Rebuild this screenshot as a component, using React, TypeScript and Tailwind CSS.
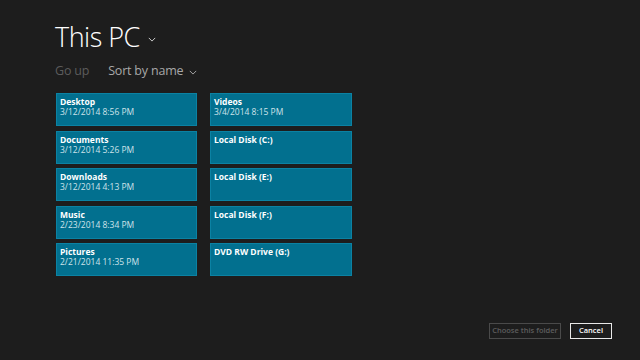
import React from "react";

const left = [
  { name: "Desktop", date: "3/12/2014 8:56 PM" },
  { name: "Documents", date: "3/12/2014 5:26 PM" },
  { name: "Downloads", date: "3/12/2014 4:13 PM" },
  { name: "Music", date: "2/23/2014 8:34 PM" },
  { name: "Pictures", date: "2/21/2014 11:35 PM" },
];
const right = [
  { name: "Videos", date: "3/4/2014 8:15 PM" },
  { name: "Local Disk (C:)", date: "" },
  { name: "Local Disk (E:)", date: "" },
  { name: "Local Disk (F:)", date: "" },
  { name: "DVD RW Drive (G:)", date: "" },
];

function Chevron({ className }: { className: string }) {
  return (
    <svg className={className} viewBox="0 0 10 6" fill="none" stroke="currentColor" strokeWidth="1.2">
      <path d="M1 1l4 4 4-4" />
    </svg>
  );
}

function Tile({ name, date, w }: { name: string; date: string; w: string }) {
  return (
    <div className={`${w} h-[33px] bg-[#02708f] border border-[#0b82a3] pl-[3px] pt-[3px] leading-[10px]`}>
      <div className="text-[8.5px] font-bold text-white">{name}</div>
      {date && <div className="text-[8.5px] text-[#cfe3ea]">{date}</div>}
    </div>
  );
}

export default function App() {
  return (
    <div
      className="w-[640px] h-[360px] bg-[#1d1d1d] relative overflow-hidden"
      style={{ fontFamily: '"Open Sans", "Noto Sans", sans-serif' }}
    >
      <div className="pl-[55px] pt-[19px]">
        <div className="flex items-center">
          <span className="text-[27px] font-light text-white leading-[36px] tracking-[-0.5px]">This PC</span>
          <Chevron className="w-[8px] h-[5px] text-[#d0d0d0] ml-[8px] mt-[4px]" />
        </div>
        <div className="flex items-center mt-[7px] text-[12.5px] leading-[18px] tracking-[-0.2px]">
          <span className="text-[#5c5c5c]">Go up</span>
          <span className="text-[#a8a8a8] ml-[19px]">Sort by name</span>
          <Chevron className="w-[8px] h-[5px] text-[#a8a8a8] ml-[6px] mt-[2px]" />
        </div>
        <div className="flex mt-[13px] ml-[1px] gap-[13px]">
          <div className="flex flex-col gap-[4.5px]">
            {left.map((t) => (
              <Tile key={t.name} {...t} w="w-[141px]" />
            ))}
          </div>
          <div className="flex flex-col gap-[4.5px]">
            {right.map((t) => (
              <Tile key={t.name} {...t} w="w-[142px]" />
            ))}
          </div>
        </div>
      </div>
      <div className="absolute right-[28px] top-[323px] flex gap-[9px]">
        <div className="w-[72px] h-[16px] border border-[#4a4a4a] flex items-center justify-center text-[7.5px] font-semibold text-[#5e5e5e]">
          Choose this folder
        </div>
        <div className="w-[42px] h-[16px] border border-[#e8e8e8] flex items-center justify-center text-[7.5px] font-semibold text-white">
          Cancel
        </div>
      </div>
    </div>
  );
}
